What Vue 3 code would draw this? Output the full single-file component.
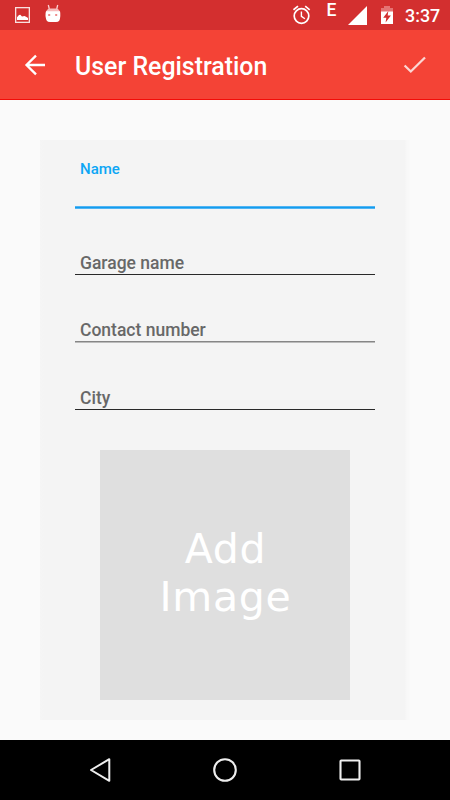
<script setup>
import { ref } from 'vue'

const fields = ref([
  { id: 'garage', label: 'Garage name' },
  { id: 'contact', label: 'Contact number' },
  { id: 'city', label: 'City' }
])
</script>

<template>
  <div class="screen">
    <header>
      <div class="status">
        <svg class="picture" width="15" height="16" viewBox="0 0 15 16">
          <rect x=".65" y=".65" width="13.7" height="14.7" fill="none" stroke="#fff" stroke-opacity=".85" stroke-width="1.3" />
          <path d="M2 13V10.2L4 8l1.3-.3L7 9.4l2.5-.5L11.500 10l1.500 1v2z" fill="#fff" />
        </svg>
        <svg class="droid" width="16" height="18" viewBox="0 0 16 18">
          <path d="M3.300 1L4.300 5M12.700 1L11.700 5" stroke="#fbd0d0" stroke-width="1.300" />
          <path d="M1 8Q2 4.800 5 4.500H11Q14 4.800 15 8z" fill="#f7bcbc" />
          <path d="M1 7.200H15Q15.500 9 15.300 12Q15.200 15 14.200 16.700Q13.300 18 11 18H5Q2.700 18 1.800 16.700Q.8 15 .5 12Q.3 9 1 7.200z" fill="#fff" />
          <path d="M3.200 10h2v2h-2zM10.200 10h2v2h-2z" fill="#ef8b8b" />
        </svg>
        <span class="spacer"></span>
        <svg class="alarm" width="18" height="20" viewBox="0 0 18 20">
          <circle cx="8.500" cy="11" r="7.300" fill="none" stroke="#fff" stroke-width="1.700" />
          <path d="M.5 4.800L5 1.200M16.700 4.800L12.200 1.200" stroke="#fff" stroke-width="1.700" />
          <path d="M8.400 6.500V11.300L11.900 13.800" fill="none" stroke="#fff" stroke-width="1.400" />
        </svg>
        <span class="network">E</span>
        <svg class="signal" width="19" height="19" viewBox="0 0 19 19"><path d="M0 19L19 0V19z" fill="#fff" /></svg>
        <svg class="battery" width="12" height="18" viewBox="0 0 12 18">
          <path d="M0 2H3V0H9V2H12V6H0z" fill="#e57373" />
          <path d="M0 5.500H12V18H0z" fill="#fff" />
          <path d="M7.300 5L2.200 11.800H5.300L4.600 16.500L9.900 9.500H6.700z" fill="#d32f2f" />
        </svg>
        <span class="time">3:37</span>
      </div>
      <div class="toolbar">
        <svg class="back" width="22" height="22" viewBox="0 0 22 22">
          <path d="M21 11H2.500M12 1.600L2.500 11L12 20.400" fill="none" stroke="#fff" stroke-width="2.300" />
        </svg>
        <h1>User Registration</h1>
        <svg class="done" width="24" height="18" viewBox="0 0 24 18">
          <path d="M1.600 9.500L7.800 15.500L22 1.500" fill="none" stroke="#fbd6d3" stroke-width="2.300" />
        </svg>
      </div>
    </header>
    <main>
      <form class="card" @submit.prevent>
        <div class="active">Name</div>
        <div v-for="field in fields" :key="field.id" class="field" :class="field.id">{{ field.label }}</div>
        <div class="image"><span>Add<br>Image</span></div>
      </form>
    </main>
    <nav>
      <svg width="24" height="26" viewBox="0 0 24 26"><path d="M21.300 2.200V23.800L3 13z" fill="none" stroke="#eee" stroke-width="2" stroke-linejoin="round" /></svg>
      <svg width="26" height="26" viewBox="0 0 26 26"><circle cx="13" cy="13" r="10.800" fill="none" stroke="#eee" stroke-width="2.100" /></svg>
      <svg width="24" height="24" viewBox="0 0 24 24"><rect x="2.500" y="2.500" width="19" height="19" rx=".7" fill="none" stroke="#eee" stroke-width="2.100" /></svg>
    </nav>
  </div>
</template>

<style>
body { margin: 0; }
</style>

<style scoped>
.screen { width: 450px; height: 800px; display: flex; flex-direction: column; background: #fafafa; font-family: Roboto, sans-serif; font-weight: 500; overflow: hidden; }
.status { box-sizing: border-box; height: 30px; display: flex; align-items: flex-start; padding: 0 10px 0 15px; background: #d32f2f; color: #fff; }
.status svg { display: block; flex: none; }
.picture { margin-top: 7px; }
.droid { margin: 4px 0 0 15px; }
.spacer { flex: 1; }
.alarm { margin: 5px 15.500px 0 0; }
.network { width: 21.500px; font-size: 17.500px; line-height: 21px; }
.signal { margin: 6px 14px 0 0; }
.battery { margin: 6px 12px 0 0; }
.time { width: 35px; font-size: 17.900px; line-height: 31px; white-space: nowrap; }
.toolbar { box-sizing: border-box; height: 70px; display: flex; align-items: center; padding: 0 23px 0 24px; background: #f44336; border-bottom: 1px solid #f30c08; }
.back { margin-top: 1px; }
h1 { flex: 1; margin: 4px 0 0 29px; color: #fff; font-size: 24.900px; line-height: 33px; font-weight: 500; white-space: nowrap; }
.done { margin-top: 1px; }
main { flex: 1; padding: 40px 40px 0; }
.card { box-sizing: border-box; height: 580px; width: 370px; padding: 0 35px; background: linear-gradient(90deg, #f5f5f5 0, #f4f4f4 4px, #f4f4f4 365px, #f7f7f7 366px, #f9f9f9 370px); }
.active { box-sizing: border-box; width: 300px; height: 69px; padding: 19px 5px 0; color: #0da6f5; background: linear-gradient(#50b4f4 1px, #149cec 1px, #149cec 2px, #50b4f4 2px) bottom / 100% 3px no-repeat; font-size: 15px; line-height: 20px; }
.field { box-sizing: border-box; width: 300px; height: 66px; padding: 43px 5px 0; color: #686868; border-bottom: 1px solid #292929; font-size: 17.500px; line-height: 22px; }
.contact { height: 67px; padding-top: 44px; border-bottom-color: #868686; box-shadow: 0 1px #bbb; }
.city { height: 68px; padding-top: 45px; }
.image { box-sizing: border-box; width: 250px; height: 250px; margin: 40px 0 0 25px; padding: 0 0 4px 1px; display: flex; align-items: center; justify-content: center; background: #dfdfdf; color: #fff; font: 400 41px/48px "DejaVu Sans", sans-serif; letter-spacing: .7px; text-align: center; }
nav { height: 60px; display: flex; align-items: center; justify-content: space-between; padding: 0 88px; background: #000; }
</style>
